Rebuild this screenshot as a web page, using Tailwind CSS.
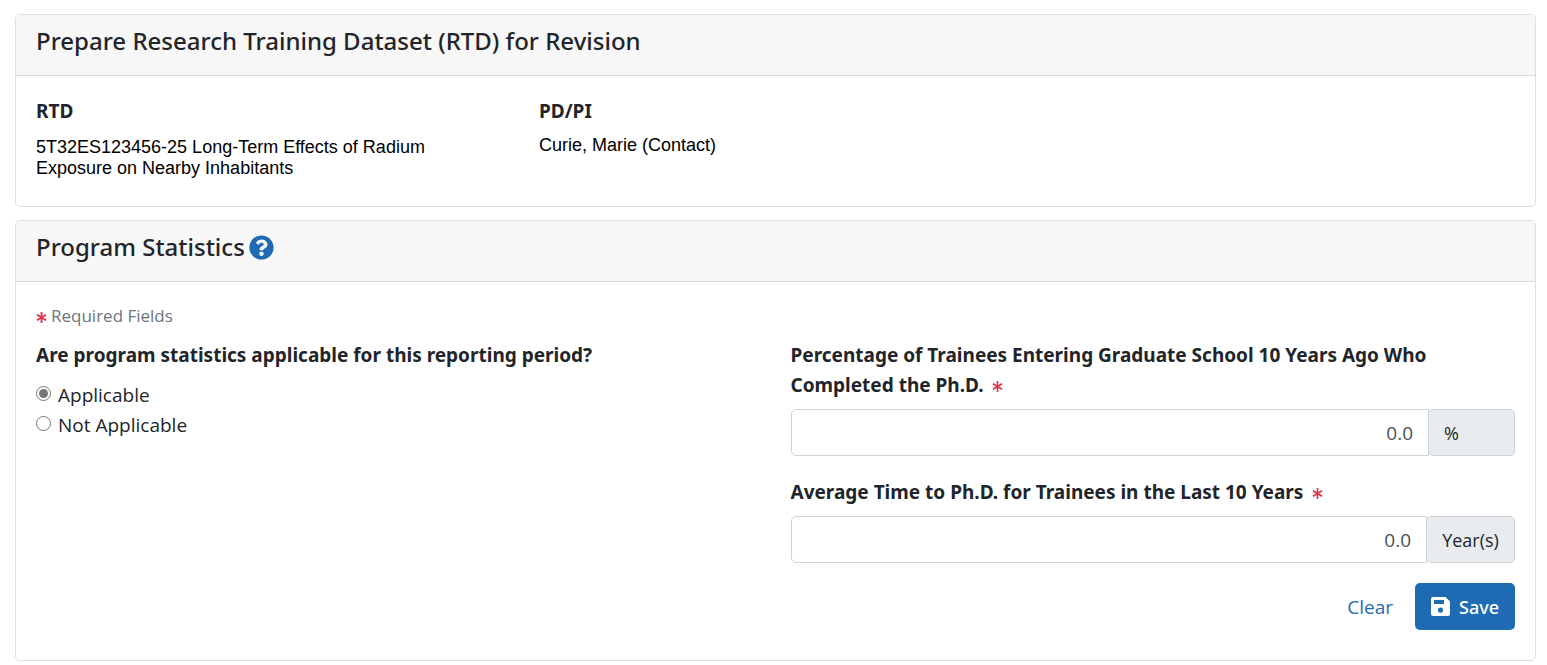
<!DOCTYPE html>
<html lang="en">
<head>
  <meta charset="UTF-8" />
  <meta name="viewport" content="width=device-width, initial-scale=1.0"/>
  <title>Prepare Research Training Dataset (RTD) for Revision</title>
  <script src="https://cdn.jsdelivr.net/npm/@tailwindcss/browser@4"></script>
</head>
<body class="bg-white text-[#212529] font-['Open_Sans','Noto_Sans',sans-serif] text-[19px] leading-[30px]">

  <main class="pl-[15px] pr-[11px] pt-[14px] space-y-[13px]">

    <!-- RTD summary -->
    <section class="border border-[#dfdfdf] rounded-[5px]">
      <header class="bg-[#f7f7f7] border-b border-[#d9d9d9] rounded-t-[4px] px-5 pt-[11px] pb-[19px]">
        <h1 class="font-['Noto_Sans',sans-serif] text-[24px] font-medium">Prepare Research Training Dataset (RTD) for Revision</h1>
      </header>
      <div class="grid grid-cols-3 gap-[30px] px-5 pt-5 pb-[27px]">
        <div>
          <h2 class="font-['Noto_Sans',sans-serif] font-bold">RTD</h2>
          <p class="font-['Liberation_Sans',sans-serif] text-[18px] text-black leading-[21px] pt-[11px] pr-10">5T32ES123456-25 Long-Term Effects of Radium Exposure on Nearby Inhabitants</p>
        </div>
        <div>
          <h2 class="font-['Noto_Sans',sans-serif] font-bold">PD/PI</h2>
          <p class="font-['Liberation_Sans',sans-serif] text-[18px] text-black leading-[21px] pt-[9px]">Curie, Marie (Contact)</p>
        </div>
      </div>
    </section>

    <!-- Program statistics -->
    <section class="border border-[#dfdfdf] rounded-[5px]">
      <header class="bg-[#f7f7f7] border-b border-[#d9d9d9] rounded-t-[4px] px-5 pt-[11px] pb-[19px] flex items-center gap-1">
        <h2 class="font-['Noto_Sans',sans-serif] text-[24px] font-medium">Program Statistics</h2>
        <button type="button" aria-label="Help" class="text-[#1f6bb3]">
          <svg class="w-[25px] h-[25px]" viewBox="0 0 512 512" fill="currentColor"><path d="M504 256c0 137-111 248-248 248S8 393 8 256 119 8 256 8s248 111 248 248zM262.700 90c-54.500 0-89.300 23-116.500 63.800-3.500 5.300-2.400 12.400 2.700 16.300l34.700 26.300c5.200 3.900 12.600 3 16.700-2.100 17.900-22.700 30.100-35.800 57.300-35.800 20.400 0 45.700 13.100 45.700 33 0 15-12.400 22.700-32.500 34C247.100 238.500 216 254.900 216 296v4c0 6.600 5.400 12 12 12h56c6.600 0 12-5.400 12-12v-1.300c0-28.500 83.200-29.600 83.200-106.700 0-58-60.200-102-116.500-102zM256 338c-25.400 0-46 20.600-46 46s20.600 46 46 46 46-20.600 46-46-20.600-46-46-46z"/></svg>
        </button>
      </header>

      <form class="px-5 pt-5 pb-[30px]">
        <p class="flex items-center gap-1 text-[17px] leading-[28px] text-[#6c757d]">
          <svg class="w-[11px] h-[11px] mt-[3px] text-[#dc3545]" viewBox="0 0 12 12" fill="none" stroke="currentColor" stroke-width="2"><path d="M6 0v12M1 3l10 6M1 9l10-6"/></svg>
          Required Fields
        </p>

        <div class="grid grid-cols-2 gap-[30px] pt-[10px]">
          <fieldset>
            <legend class="font-['Noto_Sans',sans-serif] font-bold mb-[10px]">Are program statistics applicable for this reporting period?</legend>
            <div class="flex items-center gap-[7px]">
              <input type="radio" id="applicable" name="stats" checked class="appearance-none w-[15px] h-[15px] mb-[3px] rounded-full border border-[#767676] bg-white p-[2px] bg-clip-content checked:bg-[#767676]">
              <label for="applicable">Applicable</label>
            </div>
            <div class="flex items-center gap-[7px]">
              <input type="radio" id="notApplicable" name="stats" class="appearance-none w-[15px] h-[15px] mb-[3px] rounded-full border border-[#767676] bg-white p-[2px] bg-clip-content checked:bg-[#767676]">
              <label for="notApplicable">Not Applicable</label>
            </div>
          </fieldset>

          <div>
            <label for="percentage" class="block font-['Noto_Sans',sans-serif] font-bold mb-[9px]">Percentage of Trainees Entering Graduate School 10 Years Ago Who Completed the Ph.D.
              <svg class="inline w-[11px] h-[11px] ml-1 text-[#dc3545]" viewBox="0 0 12 12" fill="none" stroke="currentColor" stroke-width="1.800"><path d="M6 0v12M1 3l10 6M1 9l10-6"/></svg>
            </label>
            <div class="flex h-[47px] mb-[21px]">
              <input type="text" id="percentage" value="0.0" class="flex-1 min-w-0 border border-[#ced4da] rounded-l-[5px] px-[15px] text-right text-[#495057]">
              <span class="flex items-center w-[87px] -ml-px border border-[#ced4da] rounded-[5px] bg-[#e9ecef] px-[15px] text-[18px]">%</span>
            </div>

            <label for="years" class="block font-['Noto_Sans',sans-serif] font-bold mb-[9px]">Average Time to Ph.D. for Trainees in the Last 10 Years
              <svg class="inline w-[11px] h-[11px] ml-1 text-[#dc3545]" viewBox="0 0 12 12" fill="none" stroke="currentColor" stroke-width="1.800"><path d="M6 0v12M1 3l10 6M1 9l10-6"/></svg>
            </label>
            <div class="flex h-[47px] mb-5">
              <input type="text" id="years" value="0.0" class="flex-1 min-w-0 border border-[#ced4da] rounded-l-[5px] px-[15px] text-right text-[#495057]">
              <span class="flex items-center justify-center w-[89px] -ml-px border border-[#ced4da] rounded-[5px] bg-[#e9ecef] text-[18px]">Year(s)</span>
            </div>

            <div class="flex justify-end">
              <button type="reset" class="h-[47px] px-[22px] text-[#1f6bb3]">Clear</button>
              <button type="submit" class="flex items-center justify-center gap-[9px] w-[100px] h-[47px] rounded-[5px] bg-[#1f6bb3] text-white font-['Noto_Sans',sans-serif] text-[18px] font-medium">
                <svg class="w-[19px] h-[19px]" viewBox="0 0 19 19" fill="currentColor" fill-rule="evenodd"><path d="M2 0h12.500L19 4.500V17a2 2 0 0 1-2 2H2a2 2 0 0 1-2-2V2a2 2 0 0 1 2-2zM3 3v4h10V3zM9.500 10.500a2.600 2.600 0 1 0 0 5.200 2.600 2.600 0 0 0 0-5.200z"/></svg>
                Save
              </button>
            </div>
          </div>
        </div>
      </form>
    </section>

  </main>

</body>
</html>
